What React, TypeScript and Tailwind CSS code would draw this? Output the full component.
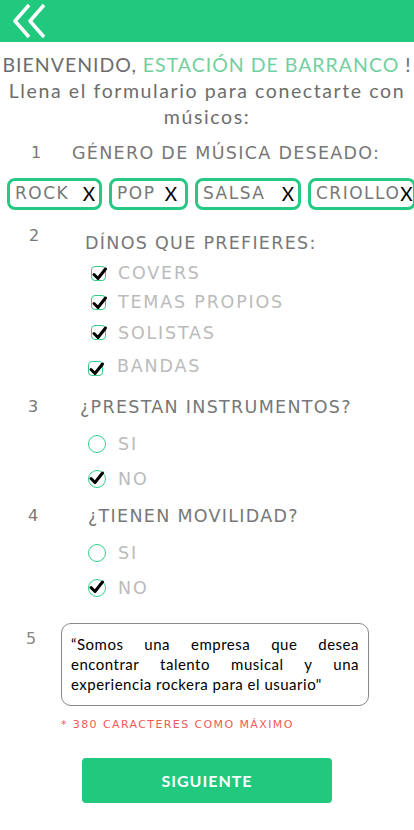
import React from 'react'

const TITLE = { fontFamily: '"Lato", "Noto Sans", sans-serif' }
const LABEL = { fontFamily: '"DejaVu Sans", "Noto Sans", sans-serif' }

function Check() {
  return (
    <svg width="18" height="18" viewBox="0 0 18 18" className="absolute -left-[1px] -top-[2px]">
      <path d="M3 9.5 L7 13.5 L14.5 4" fill="none" stroke="#000" strokeWidth="3" strokeLinecap="round" strokeLinejoin="round" />
    </svg>
  )
}

function CheckBox() {
  return (
    <span className="relative w-[15px] h-[15px] rounded-[4px] border-[1.5px] border-[#2fcf8a] shrink-0">
      <Check />
    </span>
  )
}

function Radio({ checked }: { checked?: boolean }) {
  return (
    <span className="relative w-[18px] h-[18px] rounded-full border-[1.5px] border-[#2fcf8a] shrink-0">
      {checked && <Check />}
    </span>
  )
}

function Chip({ label, w, pad }: { label: string; w: string; pad?: string }) {
  return (
    <div className={`${w} h-[32px] shrink-0 rounded-[8px] border-[3px] border-[#25c983] flex items-center justify-between pl-[5px] pr-[4px] ${pad ?? ''}`}>
      <span className="text-[17px] text-[#777] tracking-[1.5px]" style={LABEL}>{label}</span>
      <span className="text-[19px] text-black" style={TITLE}>X</span>
    </div>
  )
}

export default function App() {
  return (
    <div className="w-[414px] h-[830px] bg-white overflow-hidden">
      {/* Header */}
      <div className="h-[42px] bg-[#21c97e] flex items-center pl-[12px]">
        <svg width="36" height="36" viewBox="0 0 36 36">
          <polyline points="17,2 3,18 17,34" fill="none" stroke="#fff" strokeWidth="3.5" strokeLinejoin="round" />
          <polyline points="32,2 18,18 32,34" fill="none" stroke="#fff" strokeWidth="3.5" strokeLinejoin="round" />
        </svg>
      </div>

      {/* Title */}
      <div className="pt-[10px] text-center text-[19.5px] leading-[26px] text-[#6d6d6d]" style={TITLE}>
        <p className="whitespace-nowrap tracking-[1px]">
          BIENVENIDO, <span className="text-[#72d0a0]">ESTACIÓN DE BARRANCO</span> !
        </p>
        <p className="whitespace-nowrap tracking-[1.6px]">Llena el formulario para conectarte con</p>
        <p className="tracking-[1.6px]">músicos:</p>
      </div>

      {/* Q1 */}
      <div className="mt-[9px] h-[28px] flex items-center text-[#777]" style={LABEL}>
        <span className="w-[72px] pl-[31px] text-[16px]">1</span>
        <span className="text-[17.5px] tracking-[1.3px] whitespace-nowrap">GÉNERO DE MÚSICA DESEADO:</span>
      </div>

      <div className="mt-[11px] flex gap-[7px] pl-[7px]">
        <Chip label="ROCK" w="w-[95px]" />
        <Chip label="POP" w="w-[79px]" pad="pr-[8px]" />
        <Chip label="SALSA" w="w-[106px]" />
        <Chip label="CRIOLLO" w="w-[108px]" pad="pl-[1px] pr-0" />
      </div>

      {/* Q2 */}
      <div className="mt-[20px] h-[26px] flex items-center text-[#777]" style={LABEL}>
        <span className="w-[85px] pl-[29px] text-[16px] self-start -mt-[6px]">2</span>
        <span className="text-[17.5px] tracking-[1.3px] whitespace-nowrap">DÍNOS QUE PREFIERES:</span>
      </div>

      <div className="pl-[91px] text-[17.5px] text-[#bbb] tracking-[1.8px]" style={LABEL}>
        <div className="mt-[5px] h-[24px] flex items-center gap-[12px]"><CheckBox /><span>COVERS</span></div>
        <div className="mt-[5px] h-[24px] flex items-center gap-[12px]"><CheckBox /><span>TEMAS PROPIOS</span></div>
        <div className="mt-[6px] h-[24px] flex items-center gap-[12px]"><CheckBox /><span className="mt-[2px]">SOLISTAS</span></div>
        <div className="mt-[12px] h-[24px] flex items-center gap-[14px] -ml-[3px]"><CheckBox /><span className="-mt-[4px]">BANDAS</span></div>
      </div>

      {/* Q3 */}
      <div className="mt-[13px] h-[28px] flex items-center text-[#777]" style={LABEL}>
        <span className="w-[80px] pl-[28px] text-[16px]">3</span>
        <span className="text-[17.5px] tracking-[1.3px] whitespace-nowrap">¿PRESTAN INSTRUMENTOS?</span>
      </div>
      <div className="pl-[88px] text-[17.5px] text-[#bbb] tracking-[1.8px]" style={LABEL}>
        <div className="mt-[11px] h-[24px] flex items-center gap-[12px]"><Radio /><span>SI</span></div>
        <div className="mt-[11px] h-[24px] flex items-center gap-[12px]"><Radio checked /><span>NO</span></div>
      </div>

      {/* Q4 */}
      <div className="mt-[11px] h-[28px] flex items-center text-[#777]" style={LABEL}>
        <span className="w-[88px] pl-[28px] text-[16px]">4</span>
        <span className="text-[17.5px] tracking-[1.3px] whitespace-nowrap">¿TIENEN MOVILIDAD?</span>
      </div>
      <div className="pl-[88px] text-[17.5px] text-[#bbb] tracking-[1.8px]" style={LABEL}>
        <div className="mt-[11px] h-[24px] flex items-center gap-[12px]"><Radio /><span>SI</span></div>
        <div className="mt-[11px] h-[24px] flex items-center gap-[12px]"><Radio checked /><span>NO</span></div>
      </div>

      {/* Q5 */}
      <div className="mt-[23px] flex items-start">
        <span className="w-[61px] pl-[26px] pt-[4px] text-[16px] text-[#888]" style={LABEL}>5</span>
        <div className="w-[308px] h-[83px] rounded-[10px] border border-[#888] px-[9px] pt-[10px]">
          <p className="text-[15px] leading-[20px] text-black text-justify tracking-[0.5px]" style={TITLE}>
            “Somos una empresa que desea encontrar talento musical y una experiencia rockera para el usuario"
          </p>
        </div>
      </div>
      <p className="mt-[11px] pl-[61px] h-[16px] text-[11px] leading-[16px] text-[#f25a5a] tracking-[1.4px]" style={LABEL}>
        * 380 CARACTERES COMO MÁXIMO
      </p>

      <div className="mt-[25px] pl-[82px]">
        <button className="w-[250px] h-[45px] rounded-[4px] bg-[#21c97e] text-white text-[16px] font-bold tracking-[1px]" style={TITLE}>
          SIGUIENTE
        </button>
      </div>
    </div>
  )
}
